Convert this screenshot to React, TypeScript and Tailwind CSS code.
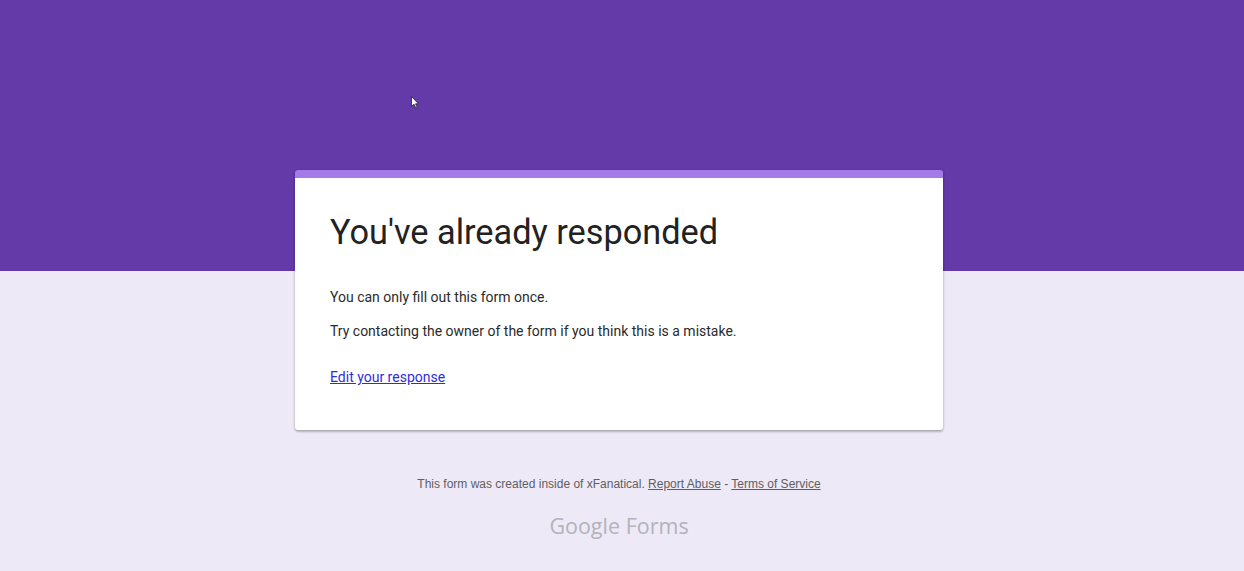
import React from "react";

export default function App() {
  return (
    <div className="relative min-h-[571px] w-full bg-[#ede9f7]" style={{ fontFamily: "Roboto, Arial, sans-serif" }}>
      <div className="h-[170px] bg-[#633aa7]" />
      <div className="bg-[linear-gradient(to_bottom,#633aa7_101px,#ede9f7_101px)] pr-[6px]">
        <div className="mx-auto w-[648px] overflow-hidden rounded-[3px] border-t-[8px] border-[#a47ae9] bg-white shadow-[0_1px_3px_rgba(0,0,0,0.25),0_2px_2px_rgba(0,0,0,0.12)]">
          <div className="px-[35px] pt-[34px] pb-[43px]">
            <h1 className="text-[34.3px] leading-[40px] font-normal text-[#222222]">You've already responded</h1>
            <p className="mt-[35px] text-[14px] leading-[20px] text-[#2a2a2a]">You can only fill out this form once.</p>
            <p className="mt-[14px] text-[14px] leading-[20px] text-[#2a2a2a]">Try contacting the owner of the form if you think this is a mistake.</p>
            <a href="#" className="mt-[26px] block w-fit text-[14px] leading-[20px] text-[#2f2ce3] underline">Edit your response</a>
          </div>
        </div>
        <div className="mt-[46px] text-center text-[12px] leading-[16px] text-[#5f5f5f]" style={{ fontFamily: "'Liberation Sans', Arial, sans-serif" }}>
          This form was created inside of xFanatical. <a href="#" className="underline">Report Abuse</a> - <a href="#" className="underline">Terms of Service</a>
        </div>
        <div className="mt-[20px] pb-[31px] text-center text-[21.5px] leading-[28px] text-[#b3b3b8]" style={{ fontFamily: "'Open Sans', Roboto, sans-serif" }}>
          <span className="font-medium">Google</span> <span>Forms</span>
        </div>
      </div>
      <svg className="absolute left-[411px] top-[96px]" width="8" height="13" viewBox="0 0 8 13">
        <path d="M0.5 0.5 L0.5 10.5 L3 8.2 L4.8 12 L6.2 11.3 L4.5 7.8 L7.5 7.8 Z" fill="#fff" stroke="#222" strokeWidth="0.8" />
      </svg>
    </div>
  );
}
